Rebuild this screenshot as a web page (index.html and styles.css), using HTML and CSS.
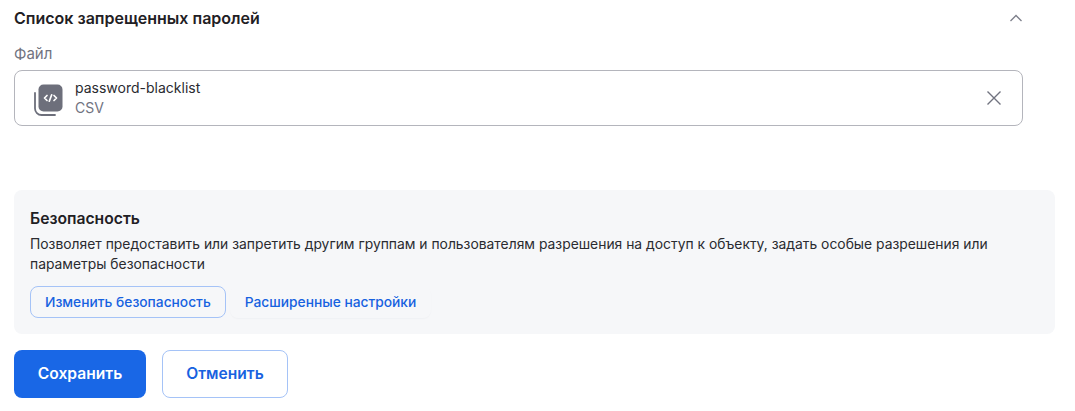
FILE: index.html
```html
<!DOCTYPE html>
<html lang="ru">
<head>
<meta charset="utf-8">
<title>Список запрещенных паролей</title>
<link rel="stylesheet" href="styles.css">
</head>
<body>
<main class="page">
  <section class="upload">
    <header class="upload-head">
      <h2 class="upload-title">Список запрещенных паролей</h2>
      <svg class="chevron" width="14" height="8" viewBox="0 0 14 8" fill="none"><path d="M1.500 7 7 1.500 12.500 7" stroke="#7d7f8a" stroke-width="1.300"/></svg>
    </header>
    <div class="field-label">Файл</div>
    <div class="file-box">
      <svg class="file-icon" width="30" height="32" viewBox="0 0 30 32" fill="none">
        <path d="M1 9v15.500A6.500 6.500 0 0 0 7.500 31H21" stroke="#6d6f7b" stroke-width="1.800" stroke-linecap="round"/>
        <rect x="4.500" y="0.500" width="24" height="27" rx="5" fill="#6d6f7b"/>
        <path d="M13 11.500 10.500 14l2.500 2.500M20 11.500 22.500 14 20 16.500M17.700 10.800l-2.400 6.400" stroke="#fff" stroke-width="1.700" stroke-linecap="round" stroke-linejoin="round"/>
      </svg>
      <div class="file-meta">
        <div class="file-name">password-blacklist</div>
        <div class="file-type">CSV</div>
      </div>
      <svg class="file-remove" width="16" height="16" viewBox="0 0 16 16" fill="none"><path d="M1.500 1.500l13 13M14.500 1.500l-13 13" stroke="#71737f" stroke-width="1.400"/></svg>
    </div>
  </section>
  <section class="security">
    <h3 class="security-title">Безопасность</h3>
    <p class="security-text">Позволяет предоставить или запретить другим группам и пользователям разрешения на доступ к объекту, задать особые разрешения или параметры безопасности</p>
    <div class="security-actions">
      <button class="btn-small btn-outline">Изменить безопасность</button>
      <button class="btn-small btn-ghost">Расширенные настройки</button>
    </div>
  </section>
  <footer class="actions">
    <button class="btn-large btn-primary">Сохранить</button>
    <button class="btn-large btn-secondary">Отменить</button>
  </footer>
</main>
</body>
</html>
```
FILE: styles.css
```css
* { box-sizing: border-box; }
html, body { margin: 0; padding: 0; background: #fff; }
body { font-family: Inter, "Liberation Sans", sans-serif; color: #1f2024; overflow: hidden; }
.page { width: 1075px; height: 411px; padding: 8px 20px 0 14px; }
.upload { width: 1009px; height: 182px; }
.upload-head { display: flex; align-items: center; justify-content: space-between; height: 20px; }
.upload-title { margin: 0; font-size: 16px; line-height: 20px; font-weight: 600; color: #1f2024; }
.chevron { display: block; margin: -1px 0 0 0; }
.field-label { margin-top: 16px; font-size: 15px; line-height: 20px; color: #71737f; }
.file-box { display: flex; align-items: center; height: 56px; margin-top: 6px; padding: 0 20px 0 19px; border: 1px solid #b4b5bc; border-radius: 8px; }
.file-icon { flex: none; margin-top: 3px; }
.file-meta { flex: 1; margin-left: 11px; margin-top: -1px; }
.file-name { font-size: 14px; line-height: 19px; color: #2a2b30; }
.file-type { margin-top: 1px; font-size: 14px; line-height: 19px; color: #71737f; }
.security { width: 1041px; height: 144px; padding: 19px 16px 0; background: #f6f7f9; border-radius: 8px; }
.security-title { margin: 0; font-size: 15.700px; line-height: 20px; font-weight: 600; color: #1f2024; }
.security-text { margin: 5px 0 0; font-size: 13.870px; line-height: 20px; color: #2a2b30; }
.security-actions { display: flex; gap: 4px; margin-top: 12px; }
.btn-small { height: 32px; padding: 0 14px; font: 500 13.780px/20px Inter, "Liberation Sans", sans-serif; color: #1762e0; border-radius: 8px; background: transparent; cursor: pointer; }
.btn-outline { border: 1px solid #a5c3f7; }
.btn-ghost { border: 0; box-shadow: 0 1px 1px #f0f1f4; padding: 0 15px; }
.actions { display: flex; gap: 16px; margin-top: 16px; }
.btn-large { height: 48px; font: 600 15.600px/20px Inter, "Liberation Sans", sans-serif; border-radius: 8px; cursor: pointer; }
.btn-primary { width: 132px; border: 0; background: #1967e6; color: #fff; }
.btn-secondary { width: 126px; border: 1px solid #a5c3f7; background: #fff; color: #1762e0; }
```
